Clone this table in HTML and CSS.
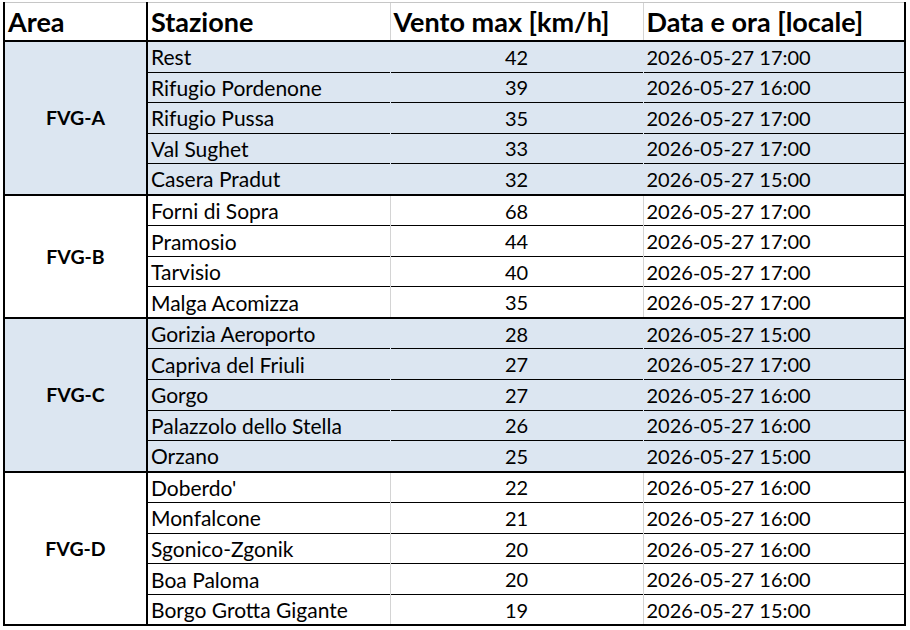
FILE: index.html
```html
<!DOCTYPE html>
<html lang="it">
<head>
<meta charset="utf-8">
<title>Vento max</title>
<link rel="stylesheet" href="styles.css">
</head>
<body>
<table class="wind">
  <colgroup>
    <col class="c-area"><col class="c-st"><col class="c-v"><col class="c-d">
  </colgroup>
  <thead>
    <tr>
      <th class="h-area">Area</th>
      <th class="h-st">Stazione</th>
      <th class="h-v">Vento max [km/h]</th>
      <th class="h-d">Data e ora [locale]</th>
    </tr>
  </thead>
  <tbody class="grp blue">
    <tr class="first"><td class="area" rowspan="5">FVG-A</td><td class="st">Rest</td><td class="v">42</td><td class="d">2026-05-27 17:00</td></tr>
    <tr><td class="st">Rifugio Pordenone</td><td class="v">39</td><td class="d">2026-05-27 16:00</td></tr>
    <tr><td class="st">Rifugio Pussa</td><td class="v">35</td><td class="d">2026-05-27 17:00</td></tr>
    <tr><td class="st">Val Sughet</td><td class="v">33</td><td class="d">2026-05-27 17:00</td></tr>
    <tr><td class="st">Casera Pradut</td><td class="v">32</td><td class="d">2026-05-27 15:00</td></tr>
  </tbody>
  <tbody class="grp white">
    <tr class="first"><td class="area" rowspan="4">FVG-B</td><td class="st">Forni di Sopra</td><td class="v">68</td><td class="d">2026-05-27 17:00</td></tr>
    <tr><td class="st">Pramosio</td><td class="v">44</td><td class="d">2026-05-27 17:00</td></tr>
    <tr><td class="st">Tarvisio</td><td class="v">40</td><td class="d">2026-05-27 17:00</td></tr>
    <tr><td class="st">Malga Acomizza</td><td class="v">35</td><td class="d">2026-05-27 17:00</td></tr>
  </tbody>
  <tbody class="grp blue">
    <tr class="first"><td class="area" rowspan="5">FVG-C</td><td class="st">Gorizia Aeroporto</td><td class="v">28</td><td class="d">2026-05-27 15:00</td></tr>
    <tr><td class="st">Capriva del Friuli</td><td class="v">27</td><td class="d">2026-05-27 17:00</td></tr>
    <tr><td class="st">Gorgo</td><td class="v">27</td><td class="d">2026-05-27 16:00</td></tr>
    <tr><td class="st">Palazzolo dello Stella</td><td class="v">26</td><td class="d">2026-05-27 16:00</td></tr>
    <tr><td class="st">Orzano</td><td class="v">25</td><td class="d">2026-05-27 15:00</td></tr>
  </tbody>
  <tbody class="grp white last">
    <tr class="first"><td class="area" rowspan="5">FVG-D</td><td class="st">Doberdo'</td><td class="v">22</td><td class="d">2026-05-27 16:00</td></tr>
    <tr><td class="st">Monfalcone</td><td class="v">21</td><td class="d">2026-05-27 16:00</td></tr>
    <tr><td class="st">Sgonico-Zgonik</td><td class="v">20</td><td class="d">2026-05-27 16:00</td></tr>
    <tr><td class="st">Boa Paloma</td><td class="v">20</td><td class="d">2026-05-27 16:00</td></tr>
    <tr><td class="st">Borgo Grotta Gigante</td><td class="v">19</td><td class="d">2026-05-27 15:00</td></tr>
  </tbody>
</table>
</body>
</html>
```

FILE: styles.css
```css
html, body {
  margin: 0;
  background: #ffffff;
}
body {
  padding: 2px 0 0 3px;
  font-family: Lato, "Open Sans", sans-serif;
  color: #000;
}
.wind {
  border-collapse: collapse;
  table-layout: fixed;
  width: 901px;
}
.c-area { width: 143px; }
.c-st { width: 243px; }
.c-v { width: 253px; }
.c-d { width: 262px; }

.wind th {
  height: 37px;
  padding: 0 0 0 3px;
  text-align: left;
  font-weight: 700;
  font-size: 27px;
  border-top: 1px solid #c6c6c6;
  border-bottom: 2px solid #000;
  white-space: nowrap;
}
.h-area { border-left: 2px solid #000; border-right: 2px solid #000; }
.h-st { border-left: 2px solid #000; }
.h-v { border-left: 1px solid #d4d4d4; }
.h-d { border-left: 1px solid #d4d4d4; border-right: 2px solid #000; }

.wind td {
  height: 29.55px;
  padding: 0 0 0 3px;
  font-size: 21px;
  white-space: nowrap;
  border-top: 1px solid #000;
}
.wind td.d { font-size: 20px; }
.wind tr.first td { border-top: 2px solid #000; }
.wind td.area {
  text-align: center;
  font-weight: 700;
  font-size: 19.5px;
  padding: 0;
  border-left: 2px solid #000;
  border-right: 2px solid #000;
}
.wind td.v { text-align: center; padding: 0; font-size: 20px; }
.wind td.d { border-right: 2px solid #000; }
.wind tbody.last tr:last-child td,
.wind tbody.last td.area { border-bottom: 2px solid #000; }

.blue td { background: #dce6f1; }
.blue td.v { border-left: 1px solid #dce6f1; border-right: 1px solid #dce6f1; }
.white td.v { border-left: 1px solid #d4d4d4; border-right: 1px solid #d4d4d4; }
```
